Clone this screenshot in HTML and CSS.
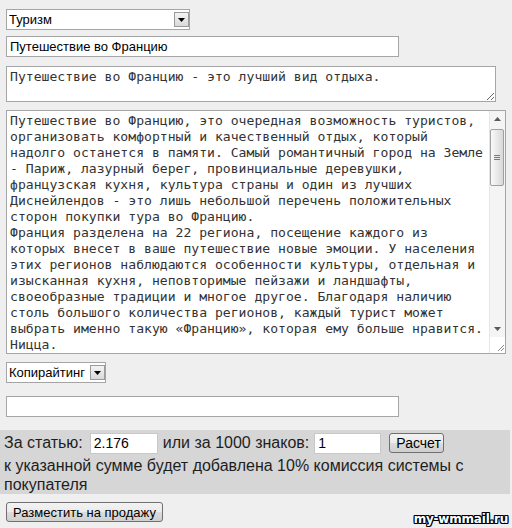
FILE: index.html
```html
<!DOCTYPE html>
<html lang="ru">
<head>
  <meta charset="UTF-8">
  <title>Разместить статью</title>
  <link rel="stylesheet" href="styles.css">
</head>
<body>
  <form class="article-form">
    <span class="pick pick-topic">
      <select name="topic">
        <option>Туризм</option>
        <option>Авто</option>
        <option>Финансы</option>
      </select>
      <span class="pick-btn"><svg width="7" height="4" viewBox="0 0 7 4"><path d="M0 0h7L3.5 4z" fill="#000"/></svg></span>
    </span>

    <input class="field field-title" type="text" name="title" value="Путешествие во Францию">

    <textarea class="area area-short" name="about">Путешествие во Францию - это лучший вид отдыха.</textarea>

    <div class="area-box">
      <textarea class="area area-text" name="text">Путешествие во Францию, это очередная возможность туристов, организовать комфортный и качественный отдых, который надолго останется в памяти. Самый романтичный город на Земле - Париж, лазурный берег, провинциальные деревушки, французская кухня, культура страны и один из лучших Диснейлендов - это лишь небольшой перечень положительных сторон покупки тура во Францию.
Франция разделена на 22 региона, посещение каждого из которых внесет в ваше путешествие новые эмоции. У населения этих регионов наблюдаются особенности культуры, отдельная и изысканная кухня, неповторимые пейзажи и ландшафты, своеобразные традиции и многое другое. Благодаря наличию столь большого количества регионов, каждый турист может выбрать именно такую «Францию», которая ему больше нравится.
Ницца.
Ницца - столица Лазурного берега и один из самых известных курортов мира. Город славится мягким климатом, Английской набережной, старинными кварталами и шумными рынками.
Канны.
Канны известны прежде всего своим кинофестивалем, но и в остальное время года здесь есть чем заняться: прогулки по набережной Круазет, песчаные пляжи, яхты и модные бутики.
Прованс.
Прованс - это лавандовые поля, маленькие каменные деревни на холмах, винодельни и неспешная жизнь.
Бретань.
Бретань встречает путешественников суровыми скалами, маяками, блинными и сидром.
Эльзас.
Эльзас соединяет черты французской и немецкой культуры: фахверковые дома, винные маршруты и рождественские ярмарки.</textarea>
      <!-- scrollbar drawn by hand, the browser one is hidden -->
      <div class="vbar" aria-hidden="true">
        <span class="vbar-btn"><svg width="7" height="4" viewBox="0 0 7 4"><path d="M0 4L3.5 0L7 4z" fill="#5a5a5a"/></svg></span>
        <span class="vbar-track">
          <span class="vbar-thumb"><svg width="6" height="6" viewBox="0 0 6 6"><path d="M0 .5h6M0 2.5h6M0 4.5h6" stroke="#7a7a7a" stroke-width="1"/></svg></span>
        </span>
        <span class="vbar-btn"><svg width="7" height="4" viewBox="0 0 7 4"><path d="M0 0h7L3.5 4z" fill="#5a5a5a"/></svg></span>
        <span class="vbar-corner"><svg width="16" height="16" viewBox="0 0 16 16"><path d="M14 8L8 14M14 11L11 14" stroke="#8a8a8a" stroke-width="1"/></svg></span>
      </div>
    </div>

    <span class="pick pick-kind">
      <select name="kind">
        <option>Копирайтинг</option>
        <option>Рерайтинг</option>
      </select>
      <span class="pick-btn"><svg width="7" height="4" viewBox="0 0 7 4"><path d="M0 0h7L3.5 4z" fill="#000"/></svg></span>
    </span>

    <input class="field field-extra" type="text" name="extra" value="">

    <div class="price">
      <div class="price-row">
        <span>За статью:</span>
        <input class="field price-input price-total" type="text" value="2.176">
        <span>или за 1000 знаков:</span>
        <input class="field price-input price-chars" type="text" value="1">
        <button class="btn btn-calc" type="button">Расчет</button>
      </div>
      <p class="price-note">к указанной сумме будет добавлена 10% комиссия системы с покупателя</p>
    </div>

    <button class="btn btn-sell" type="submit">Разместить на продажу</button>
  </form>

  <div class="mark">my-wmmail.ru</div>
</body>
</html>
```

FILE: styles.css
```css
html, body {
  margin: 0;
  padding: 0;
  height: 100%;
  background-color: #efefef;
  color: #1e1e1e;
  font-family: "Liberation Sans", Arial, sans-serif;
}

.article-form {
  padding: 9px 0 0 6px;
}

/* selects with the old-style arrow box */
.pick {
  position: relative;
  display: block;
  height: 21px;
}

.pick select {
  -webkit-appearance: none;
  appearance: none;
  display: block;
  height: 21px;
  margin: 0;
  padding: 0 18px 0 2px;
  border: 1px solid #a5a5a5;
  border-radius: 0;
  background: #fff;
  color: #000;
  font: 13px "Liberation Sans", Arial, sans-serif;
  outline: none;
}

.pick-topic select {
  width: 184px;
}

.pick-kind {
  margin-top: 8px;
}

.pick-kind select {
  width: 100px;
}

.pick-btn {
  position: absolute;
  top: 3px;
  width: 15px;
  height: 15px;
  border: 1px solid #9a9a9a;
  background: linear-gradient(#f4f4f4, #d9d9d9);
  display: flex;
  align-items: center;
  justify-content: center;
  pointer-events: none;
  box-sizing: border-box;
}

.pick-topic .pick-btn {
  left: 168px;
}

.pick-kind .pick-btn {
  left: 84px;
}

/* text inputs */
.field {
  display: block;
  box-sizing: border-box;
  height: 21px;
  margin: 0;
  padding: 0 3px;
  border: 1px solid #a5a5a5;
  background: #fff;
  color: #000;
  font: 13px "Liberation Sans", Arial, sans-serif;
  outline: none;
}

.field-title {
  width: 393px;
  margin-top: 6px;
}

.field-extra {
  width: 393px;
  margin-top: 13px;
}

/* textareas */
.area {
  display: block;
  box-sizing: border-box;
  margin: 0;
  padding: 2px 2px 2px 3px;
  border: 1px solid #a5a5a5;
  background: #fff;
  color: #333;
  font-family: "DejaVu Sans Mono", "Liberation Mono", monospace;
  font-size: 13.1px;
  line-height: 16px;
  outline: none;
}

.area-short {
  width: 490px;
  height: 36px;
  margin-top: 9px;
  overflow: hidden;
}

.area-box {
  position: relative;
  width: 500px;
  height: 244px;
  margin-top: 8px;
}

.area-text {
  width: 500px;
  height: 244px;
  padding-right: 18px;
  overflow-y: scroll;
  scrollbar-width: none;
  resize: none;
}

.vbar {
  position: absolute;
  top: 1px;
  right: 1px;
  bottom: 1px;
  width: 16px;
  display: flex;
  flex-direction: column;
  background: #f4f4f4;
  border-left: 1px solid #e6e6e6;
  box-sizing: border-box;
}

.vbar-btn {
  height: 16px;
  display: flex;
  align-items: center;
  justify-content: center;
}

.vbar-track {
  flex: 1;
  padding-top: 2px;
}

.vbar-thumb {
  display: flex;
  align-items: center;
  justify-content: center;
  height: 57px;
  margin: 0 1px 0 0;
  border: 1px solid #a0a0a0;
  border-radius: 2px;
  background: linear-gradient(to right, #fafafa, #d8d8d8);
  box-sizing: border-box;
}

.vbar-corner {
  height: 16px;
  background: #fff;
}

.vbar-corner svg {
  display: block;
}

/* price block */
.price {
  width: 510px;
  margin: 13px 0 0 -6px;
  padding: 0 4px;
  box-sizing: border-box;
  background: #d6d6d6;
  font-size: 16px;
}

.price-row {
  display: flex;
  align-items: center;
  height: 26px;
}

.price-input {
  width: 68px;
  border-color: #c8c8c8;
  font-size: 14px;
}

.price-total {
  margin: 0 5px 0 7px;
}

.price-chars {
  width: 67px;
  margin: 0 8px 0 5px;
}

.price-note {
  margin: 0;
  line-height: 19px;
}

/* buttons */
.btn {
  margin: 0;
  padding: 0 6px;
  height: 20px;
  border: 1px solid #707070;
  border-radius: 3px;
  background: linear-gradient(#f2f2f2, #ebebeb 50%, #dddddd 50%, #cfcfcf);
  color: #000;
  font: 13px "Liberation Sans", Arial, sans-serif;
}

.btn-calc {
  width: 55px;
  font-size: 14px;
}

.btn-sell {
  display: block;
  width: 157px;
  margin-top: 8px;
}

/* site watermark */
.mark {
  position: absolute;
  right: 4px;
  bottom: 2px;
  color: #fff;
  font: bold 12px "DejaVu Sans", Verdana, sans-serif;
  letter-spacing: -0.2px;
  text-shadow: -1px 0 #000, 1px 0 #000, 0 -1px #000, 0 1px #000, 1px 1px #000, -1px -1px #000, 1px -1px #000, -1px 1px #000;
}
```
